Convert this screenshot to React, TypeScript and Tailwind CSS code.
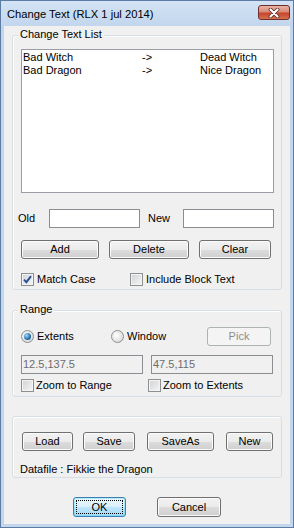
import React from "react";

const FONT = '"Liberation Sans", Arial, sans-serif';

function Btn({
  className,
  children,
  disabled,
  def,
}: {
  className: string;
  children: React.ReactNode;
  disabled?: boolean;
  def?: boolean;
}) {
  if (disabled) {
    return (
      <div
        className={
          "flex items-center justify-center rounded-[3px] border border-[#adb2b5] bg-[#f4f4f4] text-[#8d8d8d] text-[11px] leading-[13px] shrink-0 " +
          className
        }
      >
        {children}
      </div>
    );
  }
  if (def) {
    return (
      <div
        className={
          "relative flex items-center justify-center rounded-[3px] border border-[#3c7fb1] bg-[linear-gradient(#eaf6fd_0%,#d9f0fc_50%,#bee6fd_50%,#a7d9f5_100%)] shadow-[inset_0_0_0_1px_#48d3fb55] text-black text-[11px] leading-[13px] shrink-0 " +
          className
        }
      >
        <span className="absolute inset-[2px] border border-dotted border-black" />
        <span className="relative">{children}</span>
      </div>
    );
  }
  return (
    <div
      className={
        "flex items-center justify-center rounded-[3px] border border-[#707070] bg-[linear-gradient(#f2f2f2_0%,#ebebeb_50%,#dddddd_50%,#cfcfcf_100%)] shadow-[inset_0_0_0_1px_#fbfbfb] text-black text-[11px] leading-[13px] shrink-0 " +
        className
      }
    >
      {children}
    </div>
  );
}

function Check({ checked }: { checked?: boolean }) {
  return (
    <span className="flex items-center justify-center w-[13px] h-[13px] border border-[#8e8f8f] bg-[linear-gradient(135deg,#cfd2d6,#f6f6f6)] shadow-[inset_0_0_0_1px_#f4f4f4] shrink-0">
      {checked && (
        <svg width="9" height="9" viewBox="0 0 9 9">
          <path
            d="M1 4.6 L3.4 7.2 L8 1.2"
            stroke="#2a4f92"
            strokeWidth="1.9"
            fill="none"
          />
        </svg>
      )}
    </span>
  );
}

function Radio({ checked }: { checked?: boolean }) {
  return (
    <span className="flex items-center justify-center w-[13px] h-[13px] rounded-full border border-[#8e8f8f] bg-[radial-gradient(circle_at_40%_40%,#ffffff,#cfcfcf)] shrink-0">
      {checked && (
        <span className="w-[7px] h-[7px] rounded-full bg-[radial-gradient(circle_at_35%_35%,#a6dcf7,#2b76b6_55%,#0d3f72)]" />
      )}
    </span>
  );
}

function Group({
  label,
  className,
  children,
}: {
  label?: string;
  className: string;
  children: React.ReactNode;
}) {
  return (
    <div
      className={
        "relative flex flex-col rounded-[3px] border border-[#d5dfe5] shadow-[inset_1px_1px_0_#ffffff] " +
        className
      }
    >
      {label && (
        <span className="absolute -top-[8px] left-[5px] px-[2px] bg-[#f0f0f0] leading-[13px]">
          {label}
        </span>
      )}
      {children}
    </div>
  );
}

export default function App() {
  return (
    <div
      className="w-[294px] h-[528px] border border-[#5c7ca3] bg-[#c2d6ed] flex flex-col text-[11px] text-black"
      style={{ fontFamily: FONT }}
    >
      {/* title bar */}
      <div className="h-[25px] flex items-center bg-[linear-gradient(#d3e3f5,#c2d6ed)] pl-[6px] pr-[3px] shrink-0">
        <span className="text-[11.2px] leading-[14px] text-black">
          Change Text (RLX 1 jul 2014)
        </span>
        <div className="ml-auto mb-[2px] w-[32px] h-[15px] rounded-[3px] border border-[#6e2f2a] bg-[linear-gradient(#eab2a4_0%,#d98a78_45%,#c8442c_55%,#d4704f_100%)] flex items-center justify-center">
          <svg width="12" height="10" viewBox="0 0 12 10">
            <path
              d="M2.5 1.5 L9.5 8.5 M9.5 1.5 L2.5 8.5"
              stroke="#5a2a24"
              strokeWidth="3.8"
              strokeLinecap="round"
            />
            <path
              d="M2.5 1.5 L9.5 8.5 M9.5 1.5 L2.5 8.5"
              stroke="#ffffff"
              strokeWidth="2.2"
              strokeLinecap="round"
            />
          </svg>
        </div>
      </div>

      {/* client area */}
      <div className="mx-[3px] mb-[3px] flex-1 bg-[#f0f0f0] px-[8px] flex flex-col">
        {/* Change Text List */}
        <Group label="Change Text List" className="mt-[9px] h-[255px]">
          <div className="mt-[13px] ml-[8px] w-[253px] h-[144px] border border-[#9a9ea4] bg-white pt-[1px] shrink-0">
            {[
              ["Bad Witch", "->", "Dead Witch"],
              ["Bad Dragon", "->", "Nice Dragon"],
            ].map((r) => (
              <div key={r[0]} className="flex h-[13px] leading-[13px] pl-[1px]">
                <span className="w-[119px]">{r[0]}</span>
                <span className="w-[58px]">{r[1]}</span>
                <span>{r[2]}</span>
              </div>
            ))}
          </div>

          <div className="mt-[16px] h-[19px] flex items-center shrink-0">
            <span className="w-[36px] pl-[5px]">Old</span>
            <div className="w-[91px] h-[19px] border border-[#8a8d92] bg-white" />
            <span className="w-[43px] pl-[8px]">New</span>
            <div className="w-[91px] h-[19px] border border-[#8a8d92] bg-white" />
          </div>

          <div className="mt-[12px] h-[19px] flex shrink-0">
            <Btn className="ml-[8px] w-[78px] h-[19px]">Add</Btn>
            <Btn className="ml-[10px] w-[80px] h-[19px]">Delete</Btn>
            <Btn className="ml-[10px] w-[72px] h-[19px]">Clear</Btn>
          </div>

          <div className="mt-[14px] h-[13px] flex items-center shrink-0">
            <div className="ml-[8px] w-[109px] flex items-center gap-[3px]">
              <Check checked />
              <span className="leading-[13px]">Match Case</span>
            </div>
            <div className="flex items-center gap-[3px]">
              <Check />
              <span className="leading-[13px]">Include Block Text</span>
            </div>
          </div>
        </Group>

        {/* Range */}
        <Group label="Range" className="mt-[20px] h-[87px]">
          <div className="mt-[16px] h-[19px] flex items-center shrink-0">
            <div className="ml-[8px] w-[90px] flex items-center gap-[3px]">
              <Radio checked />
              <span className="leading-[13px]">Extents</span>
            </div>
            <div className="w-[96px] flex items-center gap-[3px]">
              <Radio />
              <span className="leading-[13px]">Window</span>
            </div>
            <Btn disabled className="w-[64px] h-[19px]">
              Pick
            </Btn>
          </div>

          <div className="mt-[9px] h-[19px] flex shrink-0">
            <div className="ml-[8px] w-[122px] h-[19px] border border-[#8a8d92] bg-[#f0f0f0] text-[#6d6d6d] pl-[1px] leading-[17px]">
              12.5,137.5
            </div>
            <div className="ml-[8px] w-[122px] h-[19px] border border-[#8a8d92] bg-[#f0f0f0] text-[#6d6d6d] pl-[1px] leading-[17px]">
              47.5,115
            </div>
          </div>

          <div className="mt-[5px] h-[13px] flex items-center shrink-0">
            <div className="ml-[8px] w-[127px] flex items-center gap-[2px]">
              <Check />
              <span className="leading-[13px]">Zoom to Range</span>
            </div>
            <div className="flex items-center gap-[2px]">
              <Check />
              <span className="leading-[13px]">Zoom to Extents</span>
            </div>
          </div>
        </Group>

        {/* File group */}
        <Group className="mt-[19px] h-[62px]">
          <div className="mt-[15px] h-[19px] flex shrink-0">
            <Btn className="ml-[9px] w-[51px] h-[19px]">Load</Btn>
            <Btn className="ml-[10px] w-[52px] h-[19px]">Save</Btn>
            <Btn className="ml-[12px] w-[67px] h-[19px]">SaveAs</Btn>
            <Btn className="ml-[12px] w-[47px] h-[19px]">New</Btn>
          </div>
          <div className="mt-[12px] h-[13px] leading-[13px] pl-[7px] shrink-0">
            Datafile : Fikkie the Dragon
          </div>
        </Group>

        <div className="mt-[19px] h-[20px] flex shrink-0">
          <Btn def className="ml-[61px] w-[53px] h-[20px]">
            OK
          </Btn>
          <Btn className="ml-[31px] w-[64px] h-[20px]">Cancel</Btn>
        </div>
      </div>
    </div>
  );
}
